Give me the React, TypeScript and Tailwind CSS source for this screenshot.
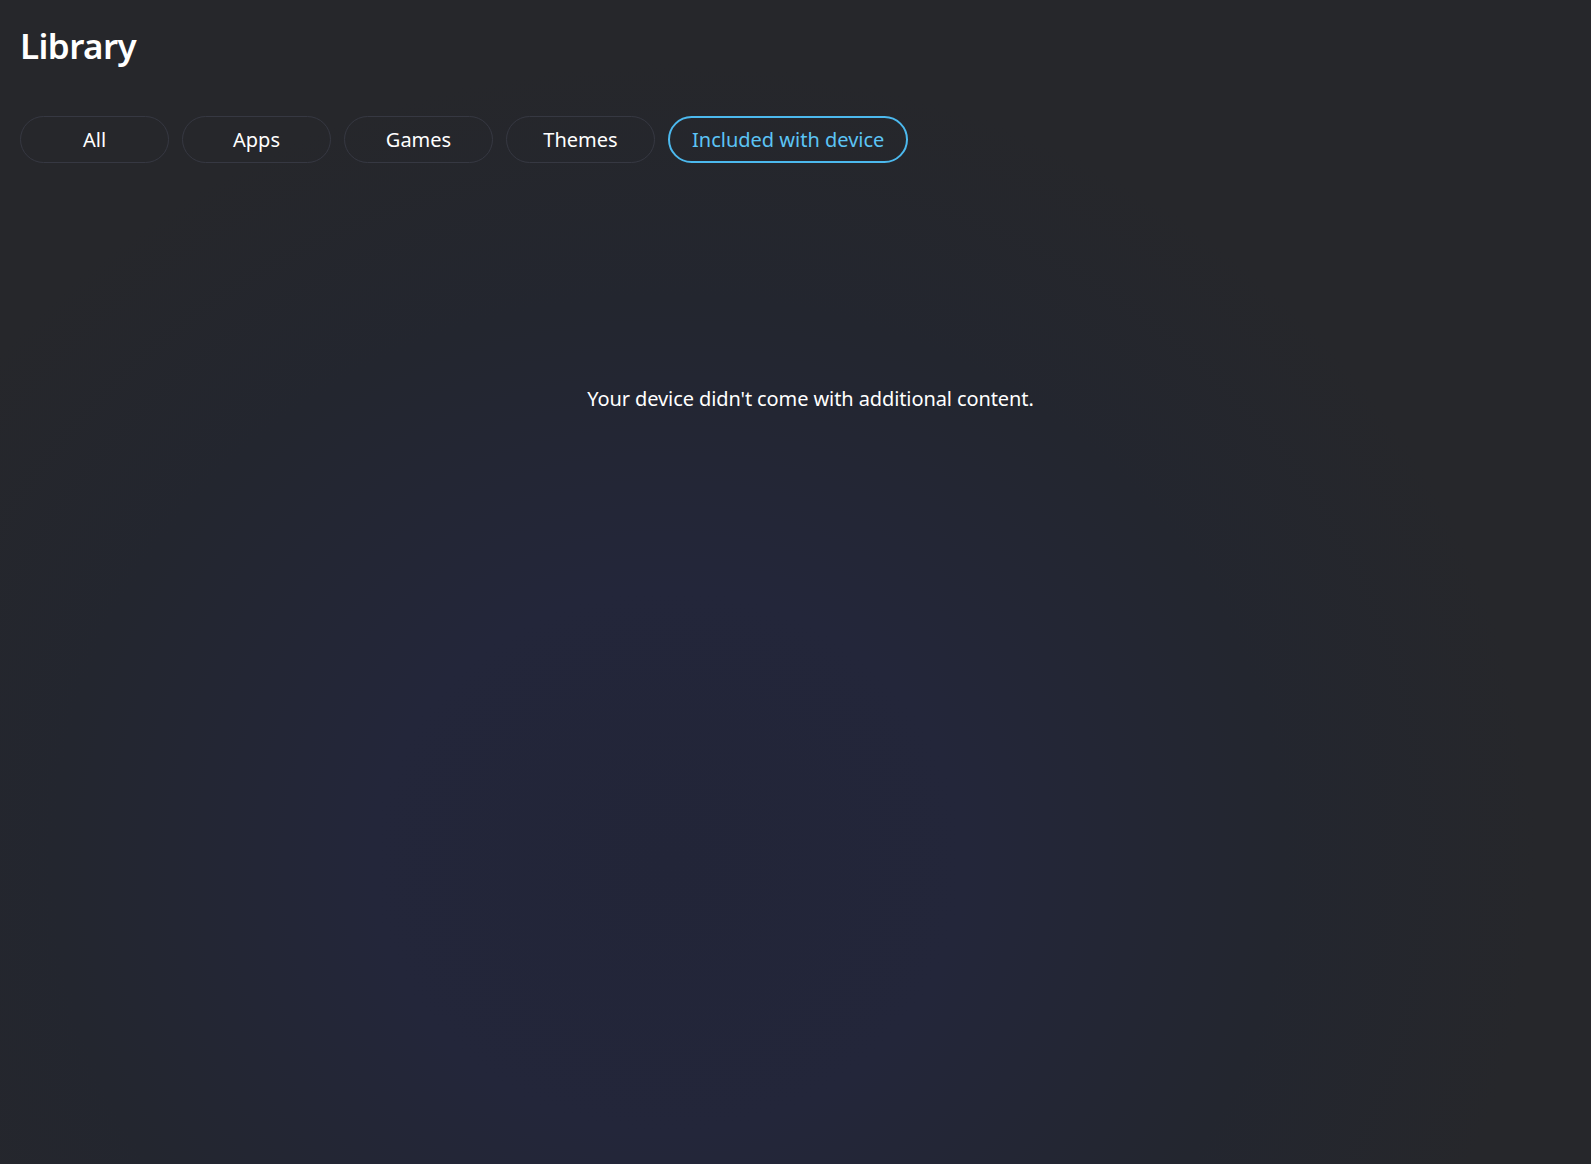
import { useState } from 'react';

const FILTERS = ['All', 'Apps', 'Games', 'Themes', 'Included with device'];

export default function App() {
  const [active, setActive] = useState('Included with device');

  return (
    <div
      className="h-[1164px] w-full overflow-hidden bg-[#25272d] bg-[radial-gradient(ellipse_62%_78%_at_42%_74%,#222538_0%,#23263a_30%,#23262f_62%,#26272b_88%)] text-white"
      style={{ fontFamily: '"Segoe UI", "Noto Sans", "Open Sans", sans-serif' }}
    >
      <div className="px-[20px] pt-[22px]">
        <h1 className="text-[35px] font-semibold leading-[48px] tracking-[-0.6px]">Library</h1>

        <div className="mt-[46px] flex gap-[13px]">
          {FILTERS.map((f) => (
            <button
              key={f}
              onClick={() => setActive(f)}
              className={`h-[47px] rounded-full text-[20px] leading-none ${
                f === active
                  ? 'border-2 border-[#4cb9ee] px-[22px] text-[#5cc4f5]'
                  : 'w-[149px] border-[1.5px] border-[#363842] text-white'
              }`}
            >
              {f}
            </button>
          ))}
        </div>
      </div>

      <div className="mt-[222px] flex justify-center pl-[30px]">
        <p className="text-[20px] leading-[28px] tracking-[-0.1px] text-white">Your device didn't come with additional content.</p>
      </div>
    </div>
  );
}
